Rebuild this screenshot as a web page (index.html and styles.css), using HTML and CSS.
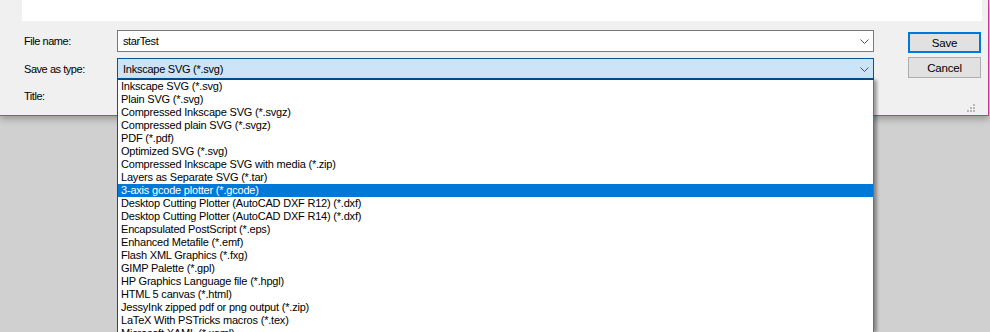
FILE: index.html
```html
<!DOCTYPE html>
<html>
<head>
<meta charset="utf-8">
<link rel="stylesheet" href="styles.css">
</head>
<body>
<div class="dialog">
  <div class="preview"></div>
  <div class="form">
    <div class="fields">
      <div class="row">
        <span class="label">File name:</span>
        <div class="field input"><span class="value">starTest</span>
          <svg class="chev" width="9" height="5" viewBox="0 0 9 5"><polyline points="0.5,0.5 4.5,4.5 8.5,0.5" fill="none" stroke="#505050" stroke-width="1"/></svg>
        </div>
      </div>
      <div class="row">
        <span class="label">Save as type:</span>
        <div class="field select"><span class="value sel">Inkscape SVG (*.svg)</span>
          <svg class="chev" width="9" height="5" viewBox="0 0 9 5"><polyline points="0.5,0.5 4.5,4.5 8.5,0.5" fill="none" stroke="#505050" stroke-width="1"/></svg>
        </div>
      </div>
      <div class="row title-row">
        <span class="label">Title:</span>
      </div>
    </div>
    <div class="buttons">
      <div class="btn primary">Save</div>
      <div class="btn">Cancel</div>
    </div>
  </div>
  <svg class="grip" width="10" height="10" viewBox="0 0 10 10">
    <rect x="7" y="1" width="2" height="2" fill="#b8b8b8"/>
    <rect x="4" y="4" width="2" height="2" fill="#b8b8b8"/>
    <rect x="7" y="4" width="2" height="2" fill="#b8b8b8"/>
    <rect x="1" y="7" width="2" height="2" fill="#b8b8b8"/>
    <rect x="4" y="7" width="2" height="2" fill="#b8b8b8"/>
    <rect x="7" y="7" width="2" height="2" fill="#b8b8b8"/>
  </svg>
</div>
<ul class="dropdown">
  <li>Inkscape SVG (*.svg)</li>
  <li>Plain SVG (*.svg)</li>
  <li>Compressed Inkscape SVG (*.svgz)</li>
  <li>Compressed plain SVG (*.svgz)</li>
  <li>PDF (*.pdf)</li>
  <li>Optimized SVG (*.svg)</li>
  <li>Compressed Inkscape SVG with media (*.zip)</li>
  <li>Layers as Separate SVG (*.tar)</li>
  <li class="hl">3-axis gcode plotter (*.gcode)</li>
  <li>Desktop Cutting Plotter (AutoCAD DXF R12) (*.dxf)</li>
  <li>Desktop Cutting Plotter (AutoCAD DXF R14) (*.dxf)</li>
  <li>Encapsulated PostScript (*.eps)</li>
  <li>Enhanced Metafile (*.emf)</li>
  <li>Flash XML Graphics (*.fxg)</li>
  <li>GIMP Palette (*.gpl)</li>
  <li>HP Graphics Language file (*.hpgl)</li>
  <li>HTML 5 canvas (*.html)</li>
  <li>JessyInk zipped pdf or png output (*.zip)</li>
  <li>LaTeX With PSTricks macros (*.tex)</li>
  <li>Microsoft XAML (*.xaml)</li>
</ul>
</body>
</html>
```

FILE: styles.css
```css
html, body {
  margin: 0;
  padding: 0;
}
body {
  position: relative;
  width: 990px;
  height: 332px;
  overflow: hidden;
  background: #d0d0d0;
  font-family: "Liberation Sans", Arial, sans-serif;
  font-size: 11px;
  color: #000;
}
.dialog {
  position: relative;
  width: 988px;
  height: 115px;
  background: #f0f0f0;
  border-right: 1px solid #c8389c;
  border-bottom: 1px solid #c8389c;
  box-shadow: 0 3px 7px rgba(0, 0, 0, 0.28);
}
.preview {
  margin-left: 22px;
  width: 960px;
  height: 21px;
  background: #fff;
}
.form {
  display: flex;
  padding-top: 9px;
}
.fields {
  margin-left: 24px;
  width: 850px;
  display: flex;
  flex-direction: column;
  gap: 6px;
}
.row {
  display: flex;
  align-items: center;
  height: 22px;
}
.title-row {
  height: 17px;
  margin-top: -1px;
  align-items: flex-end;
}
.label {
  width: 93px;
  flex: none;
  letter-spacing: -0.45px;
  color: #000;
}
.field {
  box-sizing: border-box;
  width: 757px;
  height: 22px;
  display: flex;
  align-items: center;
  justify-content: space-between;
  padding: 0 4px 0 5px;
}
.input {
  background: #fff;
  border: 1px solid #7a7a7a;
}
.select {
  background: #cce4f7;
  border: 1px solid #005499;
  border-bottom-width: 2px;
}
.value {
  letter-spacing: -0.4px;
}
.value.sel {
  letter-spacing: -0.25px;
  padding-top: 1px;
}
.chev {
  display: block;
  margin-top: 1px;
}
.buttons {
  margin-left: 34px;
  padding-top: 2px;
  display: flex;
  flex-direction: column;
  gap: 4px;
}
.btn {
  box-sizing: border-box;
  width: 73px;
  height: 21px;
  background: #e1e1e1;
  border: 1px solid #adadad;
  display: flex;
  align-items: center;
  justify-content: center;
  font-size: 11.5px;
  letter-spacing: -0.2px;
}
.btn.primary {
  border: 2px solid #0078d7;
}
.grip {
  position: absolute;
  right: 12px;
  bottom: 2px;
}
.dropdown {
  position: absolute;
  top: 80px;
  left: 117px;
  width: 757px;
  bottom: 0;
  box-sizing: border-box;
  margin: 0;
  padding: 0;
  list-style: none;
  background: #fff;
  border-left: 1px solid #1e4e74;
  border-right: 1px solid #3a7ca5;
  box-shadow: 3px 0 3px rgba(0, 0, 0, 0.35);
}
.dropdown li {
  height: 13px;
  line-height: 13px;
  padding-left: 3px;
  letter-spacing: -0.2px;
  white-space: nowrap;
}
.dropdown li.hl {
  background: #0078d7;
  color: #fff;
}
```
